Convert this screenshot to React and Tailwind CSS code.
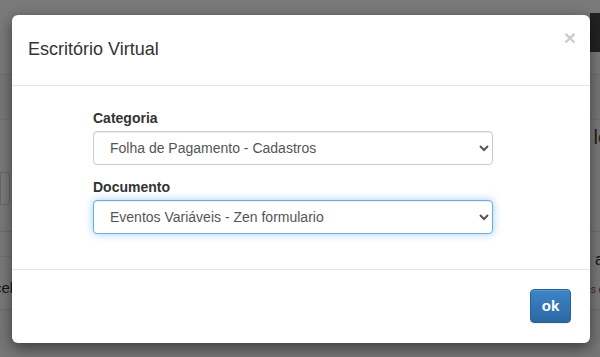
import React, { useState } from 'react';

const categorias = ['Folha de Pagamento - Cadastros', 'Folha de Pagamento - Movimento', 'Fiscal'];
const documentos = ['Eventos Variáveis - Zen formulario', 'Admissão', 'Rescisão'];

const BackgroundPage = () => (
  <div className="flex flex-col h-[357px] bg-[#f5f5f5] text-[#333]">
    {/* top bar */}
    <div className="h-[75px] border-b border-[#dcdcdc] flex justify-end">
      <div className="mt-[13px] h-[39px] w-[10px] bg-[#444]" />
    </div>
    <div className="h-[45px] border-b border-[#e2e2e2] bg-[#f0f0f0]" />
    {/* form row */}
    <div className="h-[112px] border-b border-[#dcdcdc] flex justify-between">
      <div className="mt-[52px] h-[33px] w-[10px] border border-[#ccc] rounded-r-[4px] bg-[#f8f8f8]" />
      <span className="mt-[2px] text-[20px] text-[#444] mr-[-8px]">lc</span>
    </div>
    <div className="h-[25px] border-b border-[#e0e0e0]" />
    <div className="h-[53px] border-b border-[#dcdcdc] flex justify-between items-center">
      <span className="text-[15px] ml-[-6px] mt-[10px]">ceb</span>
      <div className="flex flex-col items-end mr-[-4px]">
        <span className="text-[16px] mt-[-22px]">a</span>
        <span className="text-[10px] text-[#555] mt-[10px]">s e</span>
      </div>
    </div>
    <div className="flex-1 bg-[#eeeeee]" />
  </div>
);

const App = () => {
  const [form, setForm] = useState({ categoria: categorias[0], documento: documentos[0] });

  const handleChange = (e) => {
    const { name, value } = e.target;
    setForm((prev) => ({ ...prev, [name]: value }));
  };

  return (
    <div className="relative h-[357px] w-[600px] overflow-hidden font-['Liberation_Sans',Arial,sans-serif]">
      <BackgroundPage />

      {/* backdrop */}
      <div className="absolute inset-0 bg-black/50" />

      {/* modal */}
      <div className="absolute left-[12px] top-[15px] w-[578px] bg-white rounded-[6px] shadow-[0_5px_15px_rgba(0,0,0,0.5)]">
        {/* header */}
        <div className="relative h-[71px] border-b border-[#e5e5e5] flex items-center px-4">
          <h4 className="text-[18px] leading-[26px] text-[#333] mt-[-2px]">Escritório Virtual</h4>
          <button
            type="button"
            className="absolute right-[14px] top-[12px] text-[21px] font-bold leading-[21px] text-black opacity-20"
          >
            ×
          </button>
        </div>

        {/* body */}
        <div className="pt-[22px] pb-[35px]">
          <div className="ml-[81px] w-[400px]">
            <div className="mb-3">
              <label htmlFor="categoria" className="block text-[14px] leading-5 font-bold text-[#333] mb-[3px]">
                Categoria
              </label>
              <select
                id="categoria"
                name="categoria"
                value={form.categoria}
                onChange={handleChange}
                className="block w-full h-[34px] px-3 text-[14px] text-[#555] bg-white border border-[#ccc] rounded-[4px] shadow-[inset_0_1px_1px_rgba(0,0,0,0.075)]"
              >
                {categorias.map((c) => (
                  <option key={c} value={c}>{c}</option>
                ))}
              </select>
            </div>
            <div>
              <label htmlFor="documento" className="block text-[14px] leading-5 font-bold text-[#333] mb-[3px]">
                Documento
              </label>
              <select
                id="documento"
                name="documento"
                value={form.documento}
                onChange={handleChange}
                className="block w-full h-[34px] px-3 text-[14px] text-[#555] bg-white border border-[#66afe9] rounded-[4px] outline-none shadow-[inset_0_1px_1px_rgba(0,0,0,0.075),0_0_8px_rgba(102,175,233,0.6)]"
              >
                {documentos.map((d) => (
                  <option key={d} value={d}>{d}</option>
                ))}
              </select>
            </div>
          </div>
        </div>

        {/* footer */}
        <div className="border-t border-[#e5e5e5] pt-[19px] pb-[20px] pr-[19px] flex justify-end">
          <button
            type="button"
            className="h-[34px] w-[41px] rounded-[4px] border border-[#2a6296] bg-gradient-to-b from-[#3d85c6] to-[#2b68a3] text-white text-[15px] font-bold shadow-[inset_0_1px_0_rgba(255,255,255,0.15),0_1px_1px_rgba(0,0,0,0.075)]"
          >
            ok
          </button>
        </div>
      </div>
    </div>
  );
};

export default App;
